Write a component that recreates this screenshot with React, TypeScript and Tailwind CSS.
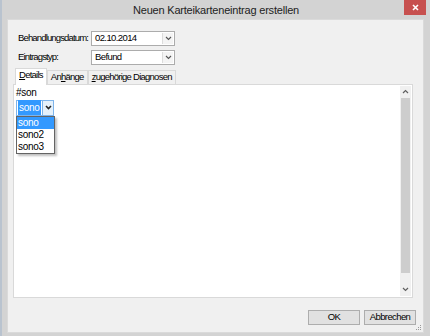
import React from "react";

const sans = '"Liberation Sans", Arial, sans-serif';

function ComboArrow({ light }: { light?: boolean }) {
    return (
        <div
            className={`flex h-full w-[11px] items-center justify-center border-l ${light ? "border-[#7eb4ea] bg-[#e5f1fb]" : "border-[#dcdcdc] bg-[#f4f4f4]"}`}
        >
            <svg width="7" height="5" viewBox="0 0 7 5">
                <path d="M1 1 L3.5 3.5 L6 1" fill="none" stroke={light ? "#222" : "#555"} strokeWidth={light ? 1.6 : 1.1} />
            </svg>
        </div>
    );
}

function Combo({ value }: { value: string }) {
    return (
        <div className="flex h-[15px] w-[84px] items-stretch border border-[#acacac] bg-white">
            <div className="flex flex-1 items-center pl-[3px] text-[9.5px] tracking-[-0.6px] text-black">{value}</div>
            <div className="p-[1px]">
                <ComboArrow />
            </div>
        </div>
    );
}

function Tab({ label, u, active }: { label: string; u: number; active?: boolean }) {
    return (
        <div
            className={`flex items-center border border-b-0 border-[#d9d9d9] px-[3px] text-[9.5px] tracking-[-0.75px] ${active ? "relative z-10 -mb-px h-[17px] bg-white pb-[2px]" : "h-[14px] bg-[#f0f0f0]"}`}
        >
            <span>
                {label.slice(0, u)}
                <span className="underline">{label[u]}</span>
                {label.slice(u + 1)}
            </span>
        </div>
    );
}

function Button({ label }: { label: string }) {
    return (
        <div className="flex h-[15px] w-[52px] items-center justify-center border border-[#adadad] bg-[#e1e1e1] text-[9.5px] tracking-[-0.6px] text-black">
            {label}
        </div>
    );
}

export default function App() {
    return (
        <div
            className="flex h-[336px] w-[430px] flex-col border-l-2 border-[#b9c3cf] bg-[#d3d3d3] text-black"
            style={{ fontFamily: sans }}
        >
            {/* title bar */}
            <div className="relative flex h-[22px] items-center justify-center pt-[2px]">
                <span className="text-[11px] tracking-[-0.2px] text-[#222]">
                    Neuen Karteikarteneintrag erstellen
                </span>
                <div className="absolute right-[4px] top-0 flex h-[15px] w-[22px] items-center justify-center bg-[#c7504f]">
                    <svg width="7" height="7" viewBox="0 0 7 7">
                        <path d="M1 1 L6 6 M6 1 L1 6" stroke="#fff" strokeWidth="1.6" />
                    </svg>
                </div>
            </div>

            {/* client */}
            <div className="mb-[6px] ml-[5px] mr-[6px] flex flex-1 flex-col border border-[#dadada] bg-[#f0f0f0]">
                <div className="flex flex-col gap-[4px] pl-[10px] pt-[11px]">
                    <div className="flex items-center">
                        <span className="w-[73px] text-[9.5px] tracking-[-0.85px]">Behandlungsdatum:</span>
                        <Combo value="02.10.2014" />
                    </div>
                    <div className="flex items-center">
                        <span className="w-[73px] text-[9.5px] tracking-[-0.85px]">Eintragstyp:</span>
                        <Combo value="Befund" />
                    </div>
                </div>

                {/* tabs */}
                <div className="ml-[7px] mt-[3px] flex items-end">
                    <Tab label="Details" u={0} active />
                    <Tab label="Anhänge" u={2} />
                    <Tab label="zugehörige Diagnosen" u={0} />
                </div>
                <div className="ml-[5px] mr-[10px] flex h-[214px] border border-[#d9d9d9] bg-white">
                    <div className="relative flex-1 pl-[2px] pt-[2px] text-[10px] tracking-[-0.3px]">
                        <div className="leading-[12px]">#son</div>
                        <div className="mt-[1px] flex h-[16px] w-[38px] items-stretch border border-[#7eb4ea] bg-white">
                            <div className="flex flex-1 items-center pl-[1px]">
                                <span className="bg-[#3399ff] px-[1px] text-white">sono</span>
                            </div>
                            <ComboArrow light />
                        </div>
                        <div className="w-[39px] border border-[#646464] bg-white shadow-[2px_2px_2px_rgba(0,0,0,0.25)]">
                            <div className="h-[12px] bg-[#3399ff] pl-[1px] leading-[12px] text-white">sono</div>
                            <div className="h-[12px] pl-[1px] leading-[12px]">sono2</div>
                            <div className="h-[12px] pl-[1px] leading-[12px]">sono3</div>
                        </div>
                    </div>
                    {/* scrollbar */}
                    <div className="my-px mr-px flex w-[11px] flex-col bg-[#f0f0f0]">
                        <div className="flex h-[12px] items-center justify-center">
                            <svg width="7" height="5" viewBox="0 0 7 5">
                                <path d="M1 4 L3.5 1.5 L6 4" fill="none" stroke="#606060" strokeWidth="1.2" />
                            </svg>
                        </div>
                        <div className="mx-px h-[175px] bg-[#cdcdcd]" />
                        <div className="flex-1" />
                        <div className="flex h-[12px] items-center justify-center">
                            <svg width="7" height="5" viewBox="0 0 7 5">
                                <path d="M1 1 L3.5 3.5 L6 1" fill="none" stroke="#606060" strokeWidth="1.2" />
                            </svg>
                        </div>
                    </div>
                </div>

                {/* buttons */}
                <div className="mt-[12px] flex justify-end gap-[4px] pr-[7px]">
                    <Button label="OK" />
                    <Button label="Abbrechen" />
                </div>
                <div className="flex flex-1 items-end justify-end pb-[1px] pr-[1px]">
                    <svg width="6" height="6" viewBox="0 0 6 6">
                        <rect x="4" y="0" width="1" height="1" fill="#999" />
                        <rect x="2" y="2" width="1" height="1" fill="#999" />
                        <rect x="4" y="2" width="1" height="1" fill="#999" />
                        <rect x="0" y="4" width="1" height="1" fill="#999" />
                        <rect x="2" y="4" width="1" height="1" fill="#999" />
                        <rect x="4" y="4" width="1" height="1" fill="#999" />
                    </svg>
                </div>
            </div>
        </div>
    );
}
